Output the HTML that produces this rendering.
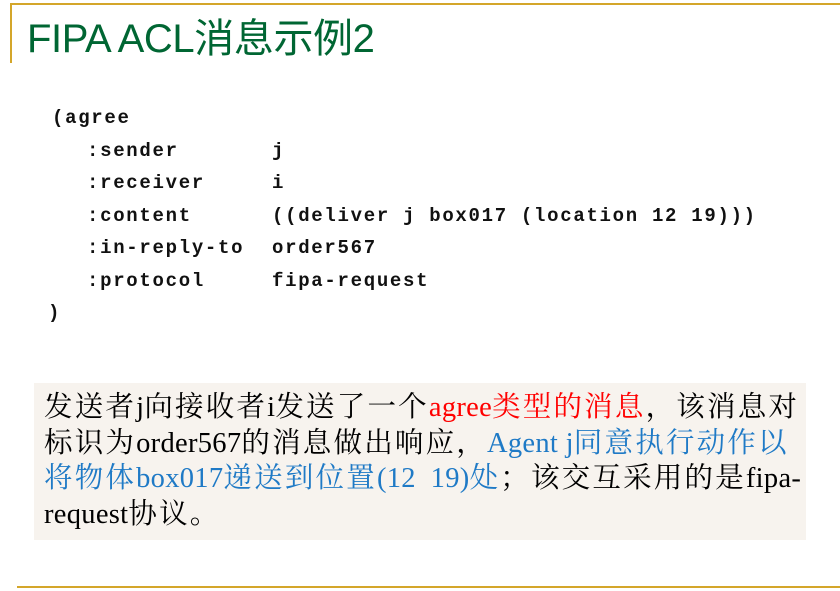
<!DOCTYPE html>
<html><head><meta charset="utf-8"><style>
body{margin:0;width:840px;height:591px;background:#fff;position:relative;overflow:hidden}
.t{position:absolute;left:27px;top:14px;font:40px "Liberation Sans","Noto Sans CJK SC",sans-serif;color:#006633;letter-spacing:-0.4px;line-height:50px}
.hl{position:absolute;left:10px;top:3px;width:830px;height:2px;background:#d4a62a}
.vl{position:absolute;left:10px;top:3px;width:2px;height:60px;background:#d4a62a}
.bl{position:absolute;left:17px;top:586px;width:823px;height:2px;background:#d4a62a}
.c{position:absolute;font:bold 19px "Liberation Mono",monospace;letter-spacing:1.7px;white-space:pre;line-height:24px;color:#111}
.box{position:absolute;left:34px;top:383px;width:772px;height:157px;background:#f7f3ee}
.p{position:absolute;left:44px;top:390px;width:770px;font:28.5px "Liberation Serif","Noto Serif CJK SC",serif;letter-spacing:2.2px;line-height:35.5px;color:#000;white-space:nowrap}
.l{letter-spacing:0.3px}
.r{color:#f00}.b{color:#1f7ac6}
</style></head><body>
<div class="hl"></div><div class="vl"></div><div class="bl"></div>
<div class="t">FIPA ACL消息示例2</div>
<div class="c" style="left:52px;top:106px">(agree</div>
<div class="c" style="left:87px;top:139px">:sender</div><div class="c" style="left:272px;top:139px">j</div>
<div class="c" style="left:87px;top:171px">:receiver</div><div class="c" style="left:272px;top:171px">i</div>
<div class="c" style="left:87px;top:204px">:content</div><div class="c" style="left:272px;top:204px">((deliver j box017 (location 12 19)))</div>
<div class="c" style="left:87px;top:236px">:in-reply-to</div><div class="c" style="left:272px;top:236px">order567</div>
<div class="c" style="left:87px;top:269px">:protocol</div><div class="c" style="left:272px;top:269px">fipa-request</div>
<div class="c" style="left:48px;top:301px">)</div>
<div class="box"></div>
<div class="p">发送者<span class="l">j</span>向接收者<span class="l">i</span>发送了一个<span class="r"><span class="l">agree</span>类型的消息</span>，该消息对<br>标识为<span class="l">order567</span>的消息做出响应，<span class="b"><span class="l">Agent j</span>同意执行动作以</span><br><span class="b">将物体<span class="l">box017</span>递送到位置<span class="l">(12&nbsp; 19)</span>处</span>；该交互采用的是<span class="l">fipa-</span><br><span class="l">request</span>协议。</div>
</body></html>
